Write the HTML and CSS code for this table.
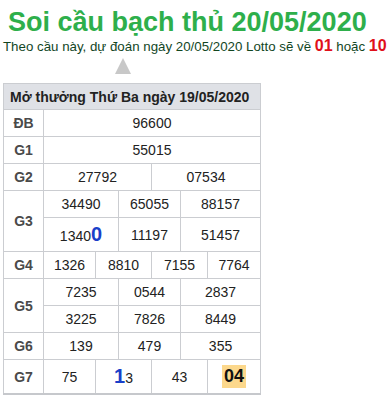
FILE: index.html
```html
<!DOCTYPE html>
<html lang="vi">
<head>
<meta charset="utf-8">
<link rel="stylesheet" href="styles.css">
</head>
<body>
<div class="page">
  <h1 class="title">Soi cầu bạch thủ 20/05/2020</h1>
  <p class="subtitle">Theo cầu này, dự đoán ngày 20/05/2020 Lotto sẽ về <b class="hit">01</b> hoặc <b class="hit">10</b></p>
  <div class="arrow-row"><span class="arrow"></span></div>
  <table class="kq">
    <colgroup>
      <col class="c-lbl"><col class="c1"><col class="c2"><col class="c3"><col class="c4"><col class="c5"><col class="c6">
    </colgroup>
    <thead>
      <tr><th colspan="7" class="head">Mở thưởng Thứ Ba ngày 19/05/2020</th></tr>
    </thead>
    <tbody>
      <tr><td class="lbl">ĐB</td><td colspan="6">96600</td></tr>
      <tr><td class="lbl">G1</td><td colspan="6">55015</td></tr>
      <tr><td class="lbl">G2</td><td colspan="3">27792</td><td colspan="3">07534</td></tr>
      <tr><td class="lbl" rowspan="2">G3</td><td colspan="2">34490</td><td colspan="2">65055</td><td colspan="2">88157</td></tr>
      <tr class="tall"><td colspan="2">1340<b class="big">0</b></td><td colspan="2">11197</td><td colspan="2">51457</td></tr>
      <tr><td class="lbl">G4</td><td>1326</td><td colspan="2">8810</td><td colspan="2">7155</td><td>7764</td></tr>
      <tr><td class="lbl" rowspan="2">G5</td><td colspan="2">7235</td><td colspan="2">0544</td><td colspan="2">2837</td></tr>
      <tr><td colspan="2">3225</td><td colspan="2">7826</td><td colspan="2">8449</td></tr>
      <tr><td class="lbl">G6</td><td colspan="2">139</td><td colspan="2">479</td><td colspan="2">355</td></tr>
      <tr class="tall last"><td class="lbl">G7</td><td>75</td><td colspan="2"><b class="big">1</b>3</td><td colspan="2">43</td><td><b class="mark">04</b></td></tr>
    </tbody>
  </table>
</div>
</body>
</html>
```

FILE: styles.css
```css
html, body {
  margin: 0;
  padding: 0;
  background: #fff;
}
.page {
  font-family: "Liberation Sans", Arial, sans-serif;
  padding: 6px 0 0 3px;
  width: 386px;
}
.title {
  margin: 0;
  padding-left: 5px;
  font-size: 27px;
  line-height: 32px;
  font-weight: bold;
  color: #2eaf4b;
  white-space: nowrap;
}
.subtitle {
  margin: 0;
  font-size: 13.3px;
  line-height: 16px;
  color: #12461f;
  white-space: nowrap;
}
.hit {
  color: #e0101a;
  font-size: 16px;
}
.arrow-row {
  height: 28px;
  padding-left: 112px;
  padding-top: 3px;
  box-sizing: border-box;
}
.arrow {
  display: block;
  width: 0;
  height: 0;
  border-left: 8px solid transparent;
  border-right: 8px solid transparent;
  border-bottom: 16px solid #c8c8c8;
}
.kq {
  border-collapse: collapse;
  table-layout: fixed;
  width: 257px;
  font-size: 14px;
  color: #222;
  border-bottom: 2px solid #c6c8cc;
}
.c-lbl { width: 40px; }
.c1 { width: 52px; }
.c2 { width: 23px; }
.c3 { width: 33px; }
.c4 { width: 29px; }
.c5 { width: 27px; }
.c6 { width: 53px; }
.kq th, .kq td {
  border: 1px solid #cbcdd1;
  text-align: center;
  height: 26px;
  padding: 0;
  white-space: nowrap;
}
.kq .head {
  background: #dfe1e6;
  font-weight: bold;
  font-size: 14px;
  color: #222;
  text-align: left;
  padding-left: 6px;
  height: 25px;
}
.kq .lbl {
  font-weight: bold;
  color: #4a4a4a;
  font-size: 14px;
}
.kq .tall td {
  height: 33px;
}
.big {
  color: #1a3fc9;
  font-size: 20px;
}
.mark {
  display: inline-block;
  background: #fcd88c;
  color: #111;
  font-size: 18px;
  line-height: 23px;
  padding: 0 2px;
}
```
